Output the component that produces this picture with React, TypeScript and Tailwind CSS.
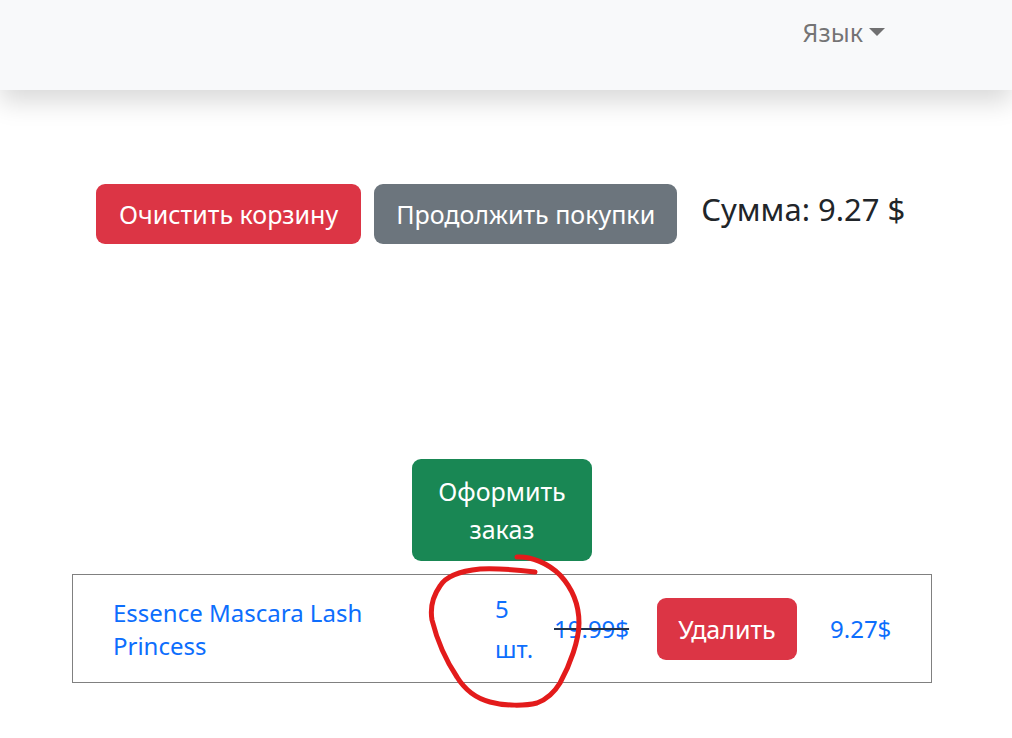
export default function App() {
  return (
    <div className="relative min-h-[738px] bg-white text-[24px] text-[#212529] [font-family:'Noto_Sans',sans-serif]">
      {/* Navbar */}
      <nav className="h-[90px] bg-[#f8f9fa] shadow-[0_12px_24px_rgba(0,0,0,0.15)]">
        <div className="flex justify-end pr-[127px] pt-[14px]">
          <button className="flex items-center text-[25px] leading-[36px] text-[rgba(0,0,0,0.55)]">
            Язык
            <span className="ml-[6px] inline-block h-0 w-0 border-x-[8px] border-t-[8px] border-x-transparent border-t-[rgba(0,0,0,0.55)]" />
          </button>
        </div>
      </nav>

      {/* Actions */}
      <div className="mt-[94px] flex items-center pl-[96px]">
        <button className="h-[60px] rounded-[9px] bg-[#dc3545] px-[23px] text-[25px] leading-[36px] text-white">
          Очистить корзину
        </button>
        <button className="ml-[13px] h-[60px] rounded-[9px] bg-[#6c757d] px-[22px] text-[25px] leading-[36px] text-white">
          Продолжить покупки
        </button>
        <div className="ml-[24px] -mt-[10px] text-[31px] leading-[44px]">Сумма: 9.27 $</div>
      </div>

      {/* Checkout */}
      <div className="mt-[215px] flex justify-center pr-[8px]">
        <button className="w-[180px] rounded-[9px] bg-[#198754] py-[13px] text-center text-[25px] leading-[38px] text-white">
          Оформить
          <br />
          заказ
        </button>
      </div>

      {/* Cart table */}
      <div className="ml-[72px] mt-[13px] flex h-[109px] w-[860px] items-center border border-[#808080] pl-[40px] text-[#0d6efd]">
        <div className="w-[382px]">
          <div className="w-[290px] leading-[33px]">Essence Mascara Lash Princess</div>
        </div>
        <div className="w-[59px] leading-[40px]">
          5
          <br />
          шт.
        </div>
        <div className="w-[103px] leading-[36px] line-through decoration-[#23324a]">19.99$</div>
        <button className="h-[62px] w-[140px] rounded-[9px] bg-[#dc3545] text-[25px] leading-[36px] text-white">
          Удалить
        </button>
        <div className="ml-[33px] leading-[36px]">9.27$</div>
      </div>

      {/* Hand-drawn annotation */}
      <svg className="pointer-events-none absolute left-0 top-0" width="1012" height="738" viewBox="0 0 1012 738">
        <path
          d="M517 557 C 530 556, 548 563, 560 575 C 572 588, 579 605, 579 623 C 579 640, 570 665, 560 683 C 554 693, 545 700, 537 703 C 525 706, 505 706, 490 702 C 475 698, 465 690, 457 677 C 447 662, 437 640, 432 620 C 430 608, 433 596, 440 586 C 446 576, 460 571, 480 569 C 498 568, 518 570, 535 572"
          fill="none"
          stroke="#e31b1b"
          strokeWidth="5"
          strokeLinecap="round"
          strokeLinejoin="round"
        />
      </svg>
    </div>
  );
}
